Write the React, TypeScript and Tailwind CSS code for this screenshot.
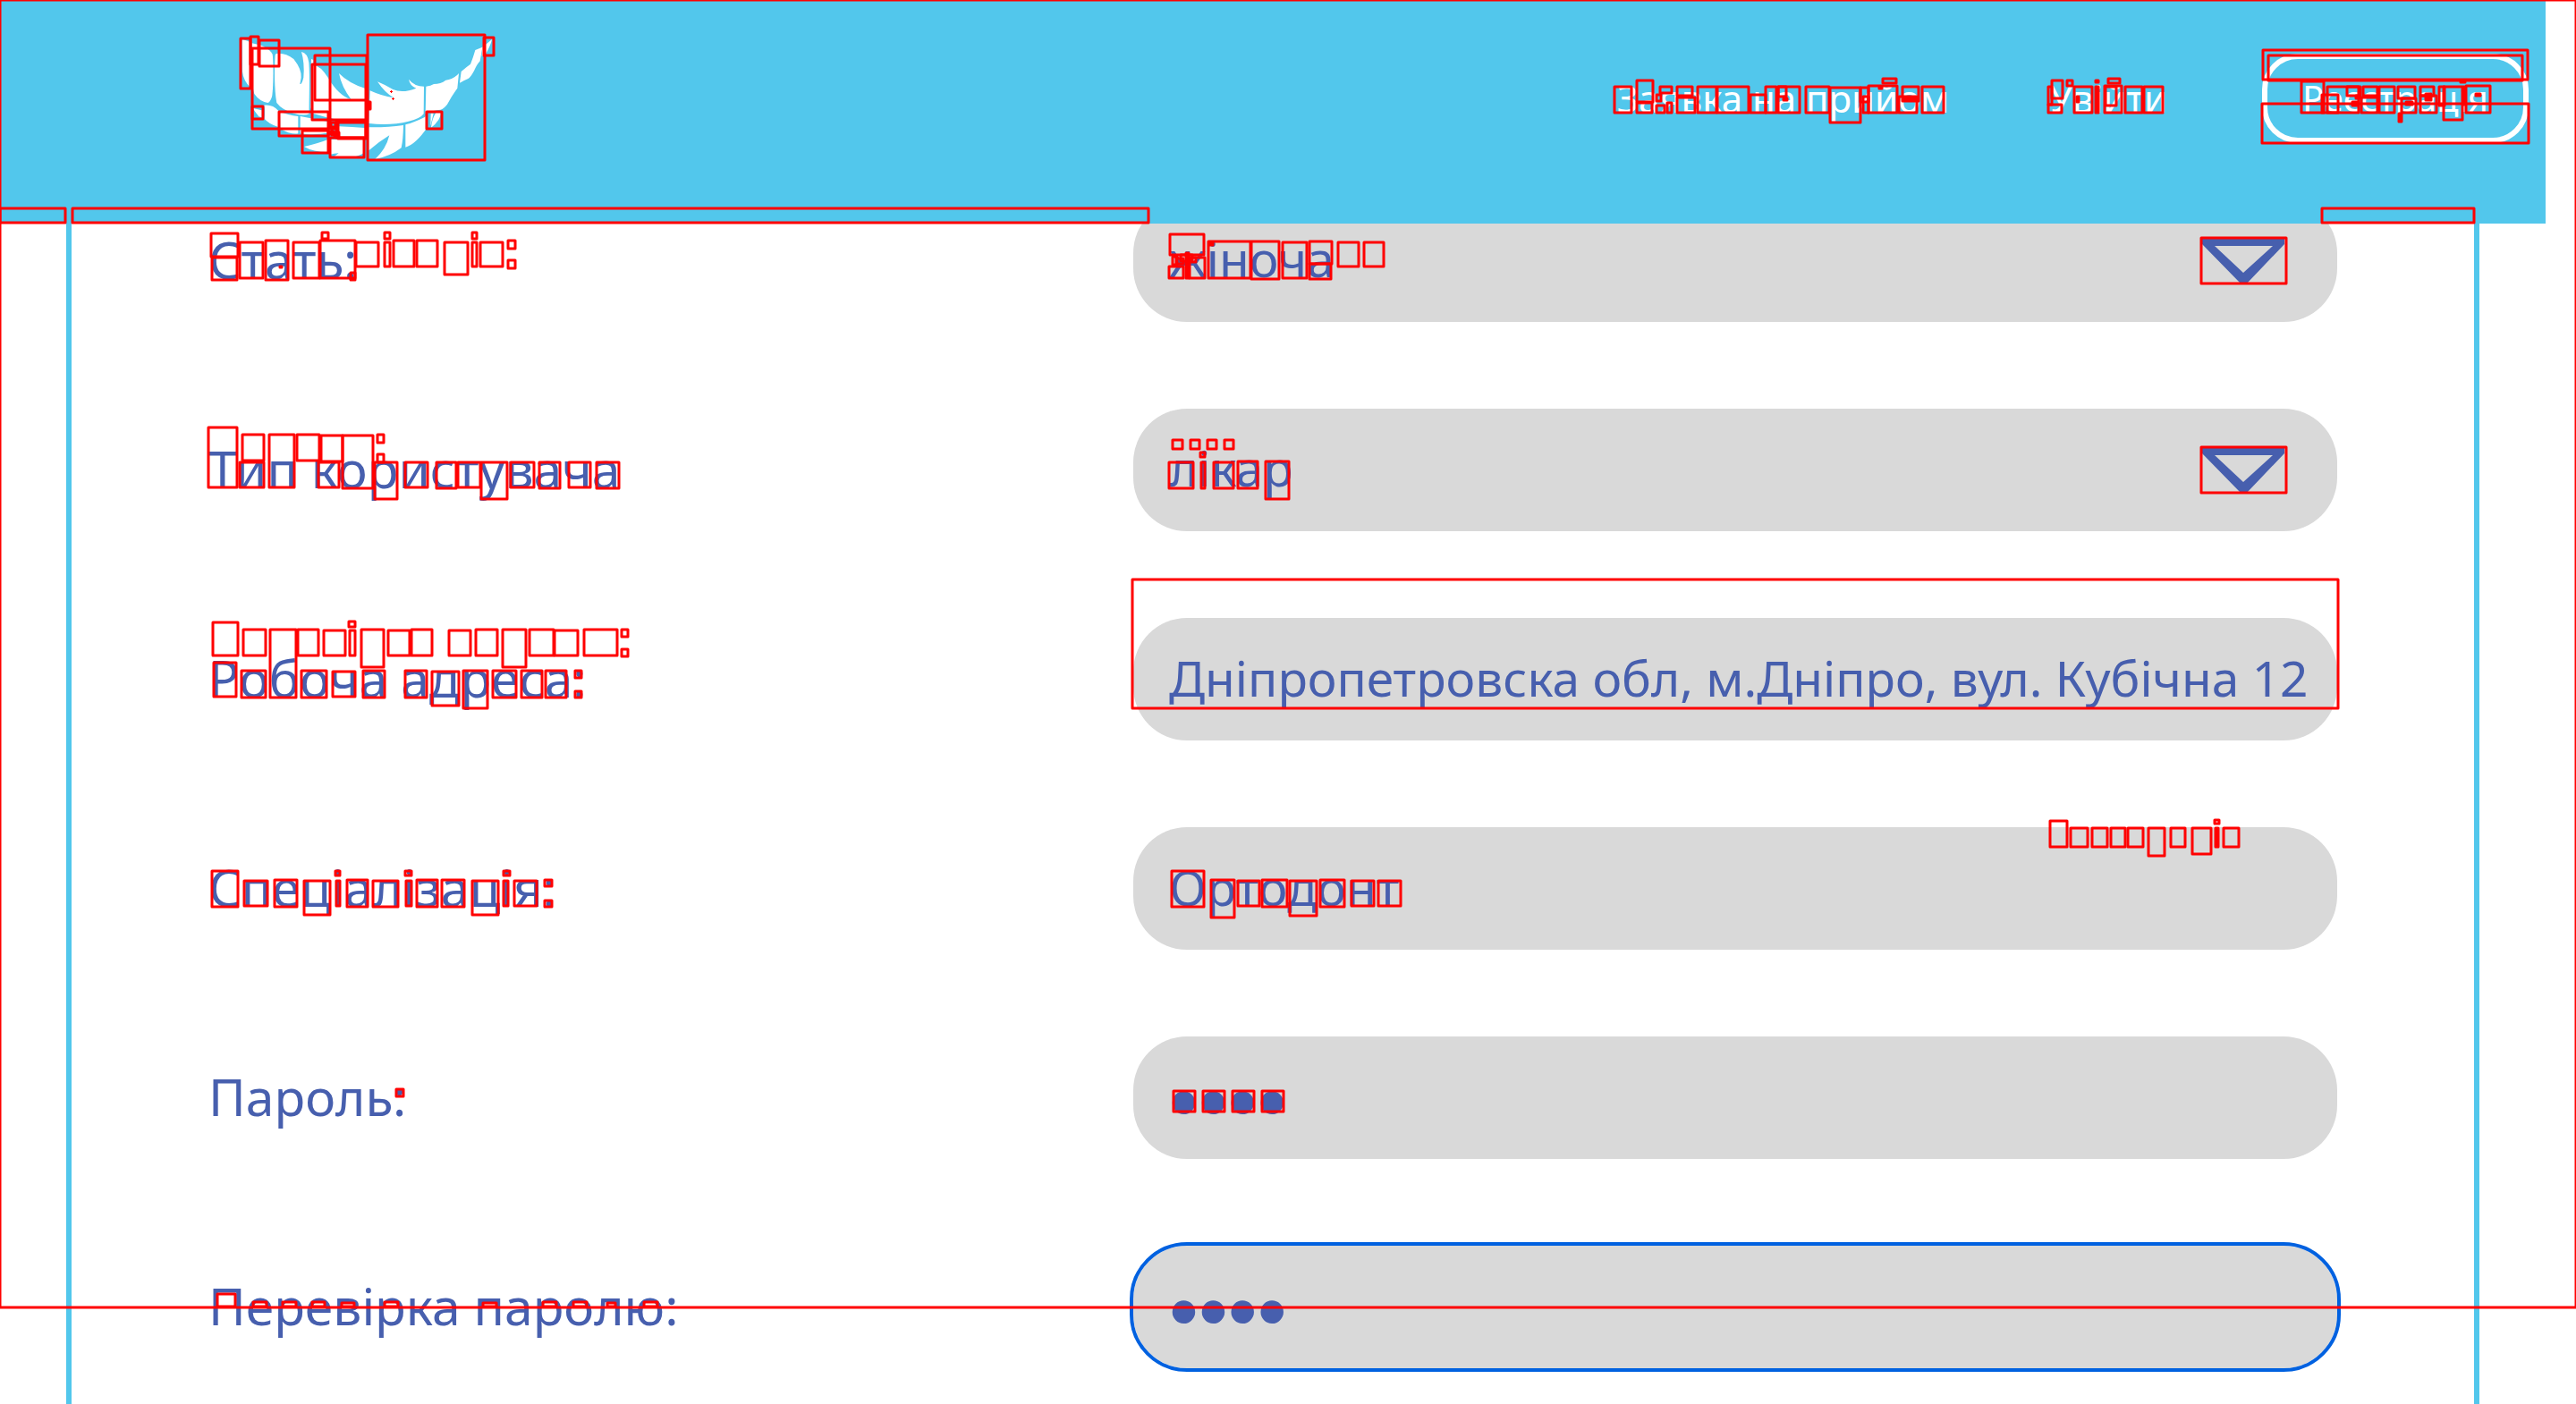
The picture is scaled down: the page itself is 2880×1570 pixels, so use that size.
import React from "react";

type Box = [number, number, number, number];

const FRAME_BOXES: Box[] = [
  [0, 0, 2880, 1462],
  [0, 233, 73, 249],
  [81, 233, 1284, 249],
  [2596, 233, 2766, 249],
  [1266, 648, 2614, 792],
  [2461, 266, 2556, 317],
  [2461, 500, 2556, 551],
];

const LOGO_BOXES: Box[] = [
  [269, 43, 280, 99], [280, 41, 289, 72], [290, 45, 312, 74], [282, 54, 369, 144],
  [282, 119, 294, 133], [312, 125, 367, 152], [338, 146, 367, 171], [352, 62, 410, 112],
  [349, 72, 409, 134], [369, 154, 407, 176], [378, 137, 409, 155], [376, 135, 409, 154],
  [411, 39, 542, 179], [541, 42, 552, 62], [477, 125, 494, 144],
  [370, 137, 375, 142], [371, 144, 377, 151], [374, 148, 379, 153], [368, 147, 373, 150],
];

const NAV_BOXES: Box[] = [
  [1805, 97, 1824, 126], [1830, 90, 1848, 114], [1830, 115, 1847, 126], [1852, 106, 1857, 113],
  [1856, 97, 1869, 104], [1852, 118, 1861, 126], [1864, 115, 1869, 126], [1875, 97, 1892, 107],
  [1875, 109, 1895, 126], [1898, 97, 1919, 126], [1920, 97, 1955, 126], [1957, 106, 1974, 126],
  [1974, 97, 1986, 126], [1988, 97, 1997, 108], [1988, 97, 2012, 126], [2019, 97, 2045, 126],
  [2046, 98, 2080, 137], [2080, 98, 2089, 114], [2083, 108, 2089, 126], [2089, 96, 2121, 126],
  [2105, 88, 2120, 93], [2123, 108, 2143, 126], [2127, 97, 2145, 113], [2149, 97, 2173, 126],
  [2294, 90, 2306, 110], [2290, 97, 2294, 117], [2290, 117, 2305, 126], [2311, 90, 2317, 96],
  [2319, 97, 2339, 126], [2343, 97, 2346, 126], [2357, 88, 2370, 93], [2353, 96, 2372, 126],
  [2354, 97, 2366, 118], [2376, 97, 2395, 126], [2397, 97, 2418, 126],
  [2530, 56, 2826, 89], [2536, 62, 2820, 90], [2529, 116, 2827, 160], [2573, 91, 2598, 126],
  [2596, 106, 2614, 126], [2602, 97, 2637, 126], [2624, 97, 2639, 107], [2642, 97, 2658, 107],
  [2640, 109, 2658, 126], [2660, 97, 2677, 126], [2681, 97, 2700, 110], [2685, 110, 2701, 126],
  [2706, 97, 2721, 107], [2706, 107, 2724, 126], [2727, 97, 2733, 118], [2732, 97, 2753, 134],
  [2757, 96, 2784, 126], [2754, 97, 2755, 117],
];

const GENDER_BOXES: Box[] = [
  [236, 261, 266, 287], [237, 288, 265, 313], [268, 271, 294, 311], [297, 269, 322, 313],
  [328, 271, 357, 311], [358, 269, 397, 311], [360, 260, 367, 267], [392, 305, 397, 313],
  [398, 271, 423, 298], [430, 260, 436, 267], [430, 271, 436, 298], [440, 269, 463, 298],
  [466, 269, 489, 298], [497, 271, 523, 307], [528, 260, 533, 267], [528, 271, 533, 298],
  [537, 271, 562, 298], [568, 269, 576, 278], [568, 291, 576, 300],
  [1308, 262, 1346, 285], [1307, 298, 1323, 311], [1330, 288, 1347, 311], [1351, 270, 1398, 311],
  [1399, 270, 1430, 312], [1434, 271, 1461, 311], [1464, 270, 1489, 295], [1464, 295, 1488, 312],
  [1496, 271, 1519, 298], [1525, 271, 1547, 298],
  [1311, 287, 1316, 296], [1315, 289, 1323, 295], [1320, 285, 1333, 292], [1332, 288, 1337, 293],
];

const TYPE_BOXES: Box[] = [
  [233, 478, 265, 545], [271, 486, 295, 515], [268, 517, 295, 545], [301, 486, 329, 545],
  [332, 486, 357, 515], [359, 487, 383, 516], [356, 517, 379, 545], [383, 487, 417, 546],
  [422, 486, 429, 495], [422, 508, 429, 517], [419, 517, 444, 558], [453, 517, 478, 545],
  [488, 517, 510, 546], [512, 517, 537, 545], [538, 517, 567, 558], [571, 517, 597, 545],
  [603, 517, 626, 546], [636, 517, 660, 545], [667, 517, 692, 546],
  [1311, 492, 1322, 502], [1331, 492, 1341, 502], [1350, 492, 1360, 502], [1369, 492, 1379, 502],
  [1342, 506, 1347, 511], [1307, 517, 1334, 546], [1343, 517, 1347, 546], [1357, 517, 1379, 546],
  [1384, 516, 1406, 546], [1415, 516, 1441, 558],
];

const ADDRESS_BOXES: Box[] = [
  [238, 696, 266, 733], [239, 741, 264, 779], [272, 704, 297, 733], [270, 750, 297, 780],
  [302, 704, 331, 780], [333, 704, 356, 733], [337, 750, 365, 780], [362, 705, 386, 733],
  [372, 751, 397, 779], [390, 695, 397, 701], [391, 705, 397, 733], [404, 704, 429, 746],
  [406, 750, 430, 780], [434, 705, 458, 733], [460, 704, 483, 733], [453, 750, 477, 780],
  [483, 751, 513, 789], [518, 750, 545, 792], [502, 705, 526, 733], [532, 704, 556, 733],
  [562, 704, 588, 746], [592, 704, 619, 733], [620, 705, 646, 733], [653, 704, 690, 733],
  [695, 704, 702, 712], [695, 726, 702, 734], [551, 750, 577, 780], [583, 750, 606, 780],
  [610, 750, 633, 780], [643, 750, 650, 758], [643, 773, 650, 780],
];

const SPECIALTY_BOXES: Box[] = [
  [237, 974, 266, 1014], [273, 985, 299, 1013], [307, 984, 332, 1014], [340, 985, 369, 1023],
  [375, 974, 380, 979], [376, 985, 380, 1013], [388, 984, 411, 1014], [417, 985, 445, 1014],
  [453, 974, 460, 979], [454, 985, 460, 1013], [466, 984, 489, 1014], [494, 984, 519, 1014],
  [528, 985, 557, 1023], [563, 974, 570, 979], [563, 985, 568, 1013], [575, 985, 600, 1013],
  [609, 984, 617, 991], [609, 1007, 617, 1014],
  [1310, 974, 1346, 1014], [1354, 984, 1380, 1026], [1384, 985, 1408, 1013], [1411, 984, 1439, 1014],
  [1442, 985, 1472, 1024], [1476, 984, 1503, 1014], [1511, 985, 1536, 1013], [1541, 985, 1566, 1013],
  [2292, 918, 2311, 947], [2315, 926, 2334, 947], [2339, 926, 2356, 947], [2360, 926, 2376, 947],
  [2379, 926, 2396, 947], [2402, 926, 2420, 957], [2427, 926, 2443, 947], [2451, 926, 2472, 955],
  [2476, 917, 2481, 921], [2477, 926, 2480, 947], [2486, 926, 2503, 947],
];

const PASSWORD_BOXES: Box[] = [
  [443, 1218, 451, 1226],
  [1312, 1220, 1336, 1243], [1345, 1220, 1369, 1243], [1378, 1220, 1402, 1243], [1411, 1220, 1435, 1243],
  [243, 1447, 263, 1461], [283, 1456, 298, 1461], [316, 1456, 331, 1461], [349, 1456, 363, 1461],
  [382, 1457, 396, 1461], [430, 1456, 445, 1461], [540, 1457, 555, 1461], [607, 1456, 622, 1461],
  [641, 1456, 656, 1461], [679, 1457, 688, 1461], [720, 1456, 735, 1461],
];

const SOLID_BOXES: Box[] = [
  [412, 114, 414, 122], [2101, 97, 2104, 99],
  [2322, 108, 2324, 114], [2343, 90, 2346, 92], [2682, 127, 2685, 136], [2751, 91, 2756, 92],
  [2768, 105, 2773, 107], [2630, 114, 2636, 118], [2634, 107, 2638, 110], [2712, 105, 2718, 112],
  [2690, 114, 2697, 117], [1326, 283, 1329, 311], [1352, 272, 1356, 274], [313, 298, 315, 299],
  [1994, 110, 1998, 112], [2128, 110, 2142, 111],
];

const BOXES: Box[] = [
  ...FRAME_BOXES,
  ...LOGO_BOXES,
  ...NAV_BOXES,
  ...GENDER_BOXES,
  ...TYPE_BOXES,
  ...ADDRESS_BOXES,
  ...SPECIALTY_BOXES,
  ...PASSWORD_BOXES,
];

/** Outlines of the changed regions, drawn above the page. */
function DiffOverlay() {
  return (
    <svg
      aria-hidden="true"
      className="pointer-events-none absolute inset-0 z-20 h-full w-full"
      fill="none"
      stroke="#ff0000"
      strokeWidth={3}
      strokeLinejoin="round"
    >
      {BOXES.map(([x1, y1, x2, y2], i) => (
        <rect key={i} x={x1} y={y1} width={x2 - x1} height={y2 - y1} />
      ))}
      <g fill="#ff0000">
        {SOLID_BOXES.map(([x1, y1, x2, y2], i) => (
          <rect key={i} x={x1} y={y1} width={x2 - x1} height={y2 - y1} />
        ))}
      </g>
      <path d="M436 102.5H439M437.5 101V104M438 110.5H441M439.5 109V112" strokeWidth={1} />
    </svg>
  );
}

function SmileLogo() {
  return (
    <svg viewBox="54 60 852 420" className="h-[140px] w-[284px] fill-white" role="img" aria-label="Dental clinic">
      <path d="M62 72Q80 76 90 82L90 234Q66 210 63 180Z" />
      <path d="M95 85Q150 95 164 122C168 150 167 240 162 265Q155 285 148 285Q120 280 103 255Q97 235 95 200Z" />
      <path d="M176 120Q205 115 235 138Q262 172 260 200L256 222Q262 225 268 200Q272 150 261 114Q282 118 286 150C290 200 286 280 287 322Q270 330 235 320Q195 308 178 285C170 240 170 170 173 125Z" />
      <path d="M294 138L301 141L301 158Q325 160 350 200Q385 260 428 274Q395 230 387 186Q420 220 478 238L478 352Q400 352 298 320L292 300Z" />
      <path d="M491 244Q530 262 570 268Q540 250 516 214Q545 226 568 240Q600 254 646 236Q625 228 621 206Q640 230 672 230L671 322Q660 338 620 347Q560 362 487 354Z" />
      <path d="M679 230Q695 228 705 222Q728 222 745 209Q775 204 789 186L784 236Q765 262 750 290Q738 305 728 308Q700 310 677 322Z" />
      <path d="M797 180Q815 164 828 155Q838 130 844 108L868 98L860 145Q850 155 840 178Q828 200 820 204Q806 210 792 218Z" />
      <path d="M868 98Q885 85 900 72Q895 95 878 122L866 128Z" />
      <path d="M98 303L128 310L128 334L118 331Q105 315 98 303Z" />
      <path d="M136 293Q165 290 184 312L184 366Q150 355 137 338Q140 310 136 293Z" />
      <path d="M189 314Q215 326 250 330L250 388Q225 392 190 372Z" />
      <path d="M257 330Q300 338 350 348L358 356L358 385Q300 395 257 388Z" />
      <path d="M386 364Q430 366 474 369L474 400L386 400Z" />
      <path d="M270 432Q320 420 350 408L350 450Q300 450 270 432Z" />
      <path d="M358 408L472 408L472 452Q450 465 436 466L370 466L386 454Q370 455 358 458Z" />
      <path d="M487 367Q550 368 603 360Q602 410 596 436Q560 464 508 474Q545 440 556 394Q520 416 487 445Z" />
      <path d="M610 358Q640 350 676 332L682 318L684 366Q645 424 610 434Z" />
      <path d="M695 320L704 320L694 362Z" />
      <path d="M729 316Q728 345 696 368Q698 340 712 318Z" />
    </svg>
  );
}

function Header() {
  return (
    <header className="relative z-10 flex h-[250px] items-start justify-between bg-[#52c7ec] pr-[19px] pl-[268px] text-white">
      <a href="#" className="mt-10 block">
        <SmileLogo />
      </a>
      <nav className="mt-[60px] flex items-center text-[42px] leading-[56px] whitespace-nowrap">
        <a href="#" className="mr-[112px]">Заявка на прийом</a>
        <a href="#" className="mr-[106px]">Увійти</a>
        <button type="button" className="h-[100px] w-[298px] rounded-[40px] border-[6px] border-white text-[40px]">
          Реєстрація
        </button>
      </nav>
    </header>
  );
}

const FIELD = "h-[137px] w-full rounded-[60px] bg-[#d9d9d9] pr-8 pl-10 text-[#475fae]";
const TEXT = "pb-1 text-[55px]";
const SECRET = "pt-[10px] font-['Liberation_Sans',sans-serif] text-[94px]";

function Row({ id, label, children }: { id: string; label: string; children: React.ReactNode }) {
  return (
    <div className="grid grid-cols-[1034fr_1346fr] items-center">
      <label htmlFor={id} className="pb-1 text-[57px] leading-[76px]">
        {label}
      </label>
      {children}
    </div>
  );
}

function SelectField({ id, options }: { id: string; options: string[] }) {
  return (
    <div className="relative">
      <select id={id} className={`${FIELD} ${TEXT} appearance-none outline-none`} defaultValue={options[0]}>
        {options.map((option) => (
          <option key={option}>{option}</option>
        ))}
      </select>
      <svg
        aria-hidden="true"
        viewBox="0 0 94 51"
        className="pointer-events-none absolute top-[44px] right-[58px] h-[51px] w-[94px] fill-[#475fae]"
      >
        <path fillRule="evenodd" d="M1 0H93V6L51 50H44L1 6ZM15 8H80L47 38Z" />
      </svg>
    </div>
  );
}

export default function App() {
  return (
    <div className="relative flex min-h-screen flex-col overflow-hidden bg-white pr-[34px] font-['Noto_Sans',sans-serif]">
      <Header />
      <form className="mx-[74px] -mt-[27px] flex flex-1 flex-col gap-[97px] border-x-[6px] border-[#52c7ec] px-[153px] pb-10 text-[#475fae]">
        <Row id="gender" label="Стать:">
          <SelectField id="gender" options={["жіноча", "чоловіча"]} />
        </Row>
        <Row id="type" label="Тип користувача">
          <SelectField id="type" options={["лікар", "пацієнт"]} />
        </Row>
        <Row id="address" label="Робоча адреса:">
          <input id="address" type="text" className={`${FIELD} ${TEXT}`} defaultValue="Дніпропетровска обл, м.Дніпро, вул. Кубічна 12" />
        </Row>
        <Row id="specialty" label="Спеціалізація:">
          <input id="specialty" type="text" className={`${FIELD} ${TEXT}`} defaultValue="Ортодонт" />
        </Row>
        <Row id="password" label="Пароль:">
          <input id="password" type="password" className={`${FIELD} ${SECRET}`} defaultValue="1234" />
        </Row>
        <Row id="confirm" label="Перевірка паролю:">
          <input
            id="confirm"
            type="password"
            className={`${FIELD} ${SECRET} outline-4 outline-[#0061e0]`}
            defaultValue="1234"
          />
        </Row>
      </form>
      <DiffOverlay />
    </div>
  );
}
